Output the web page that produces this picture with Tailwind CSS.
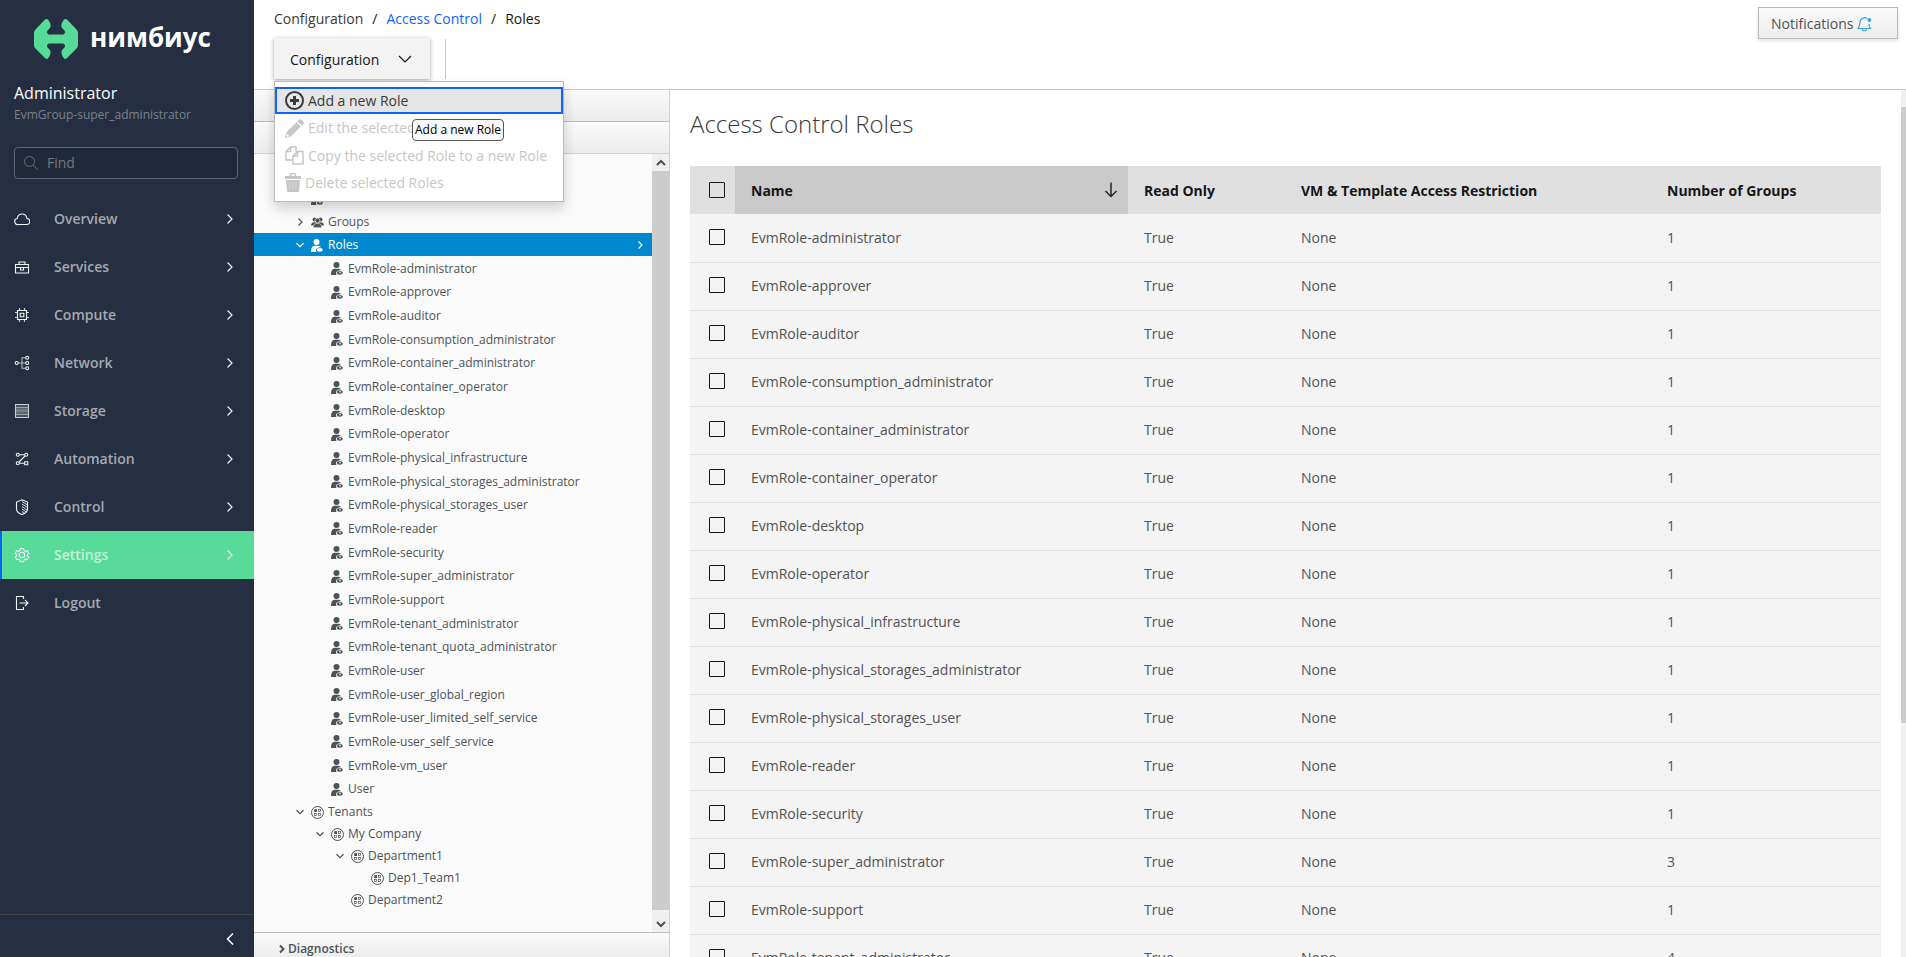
<!DOCTYPE html>
<html lang="en">
<head>
<meta charset="utf-8">
<title>Configuration / Access Control / Roles</title>
<script src="https://cdn.jsdelivr.net/npm/@tailwindcss/browser@4"></script>
</head>
<body class="font-['Open_Sans','Noto_Sans',sans-serif] text-sm text-[#161616] bg-white">
<svg class="hidden" aria-hidden="true">
  <symbol id="chev-right" viewBox="0 0 16 16"><path d="M5.500 3.500 10 8l-4.500 4.500" fill="none" stroke="currentColor" stroke-width="1.200"/></symbol>
  <symbol id="angle-right" viewBox="0 0 10 10"><path d="M3.500 1.500 7 5 3.500 8.500" fill="none" stroke="currentColor" stroke-width="1.200"/></symbol>
  <symbol id="angle-down" viewBox="0 0 10 10"><path d="M1.500 3.300 5 6.700 8.500 3.300" fill="none" stroke="currentColor" stroke-width="1.200"/></symbol>
  <symbol id="angle-bold" viewBox="0 0 10 10"><path d="M3 1.500 6.500 5 3 8.500" fill="none" stroke="currentColor" stroke-width="2"/></symbol>
  <symbol id="scroll-chev" viewBox="0 0 10 10"><path d="M1 7 5 3l4 4" fill="none" stroke="#505050" stroke-width="2"/></symbol>
  <symbol id="role" viewBox="0 0 12 13"><circle cx="5.500" cy="3" r="3"/><path d="M0 13c0-4 1-6 3.500-6.300h4C9 7 9.800 7.500 10.300 8.500 8 8 5.500 9 5 10.800c-.1.900.2 1.600.6 2.200z"/><ellipse cx="8.800" cy="10.800" rx="2.900" ry="1.900"/><circle cx="9" cy="10.600" r="1" fill="#fafafa" fill-opacity=".75"/></symbol>
  <symbol id="groups" viewBox="0 0 13 12"><circle cx="3.500" cy="3.500" r="2"/><circle cx="9.500" cy="3.500" r="2"/><path d="M0 9.500C.2 7.500 1 6.300 3 6.200h7c2 .1 2.800 1.300 3 3.300z"/><circle cx="6.500" cy="4.500" r="2.400" stroke="#fafafa" stroke-width=".6"/><path d="M2.200 11.700c.1-2.600 1.100-4.200 3.300-4.300h2c2.200.1 3.200 1.700 3.300 4.300z" stroke="#fafafa" stroke-width=".6"/></symbol>
  <symbol id="tenant" viewBox="0 0 13 13"><circle cx="6.500" cy="6.500" r="6" fill="none" stroke="currentColor"/><rect x="3.200" y="3.200" width="2.800" height="2.800"/><g fill="none" stroke="currentColor" stroke-width=".7"><rect x="7.400" y="3.400" width="2" height="2"/><rect x="3.500" y="7.500" width="2" height="2"/><rect x="7.400" y="7.500" width="2" height="2"/></g></symbol>
</svg>

<div class="flex h-screen overflow-hidden">
  <aside class="flex w-[254px] shrink-0 flex-col bg-[#252f41]">
    <a href="#" class="flex items-center pt-[19px] pl-[34px] text-white">
      <svg class="h-10 w-11" viewBox="0 0 44 40" aria-hidden="true"><path fill="#58da98" d="M11 .5Q12.500-.5 14 .5 16.500 3.500 16.700 7q-.2 1.500-1.700 3-3 2.500-1.500 4.500Q14.500 16 17 15.500h10q2.500.5 3.500-1 1.500-2-1.500-4.500-1.500-1.500-1.700-3Q27.500 3.500 30 .5q1.500-1 3 0L43 11q1 1.500 1 3v12q0 2-1 3L33 39q-1.500 1.500-3 .5-2.500-3-2.700-6.500.2-1.500 1.700-3 3-2.500 1.500-4.500-1-1.500-3.500-1H17q-2.500-.5-3.500 1-1.500 2 1.500 4.500 1.500 1.500 1.700 3-.2 3.500-2.700 6.500-1.500 1-3-.5L1 29q-1-1-1-3V14q0-1.500 1-3z"/></svg>
      <span class="ml-3 pb-1 text-[26px] leading-9 font-bold">нимбиус</span>
    </a>
    <div class="px-3.5 pt-6">
      <div class="text-base leading-5 text-white">Administrator</div>
      <div class="mt-0.5 text-xs leading-5 text-[#7b828d]">EvmGroup-super_administrator</div>
    </div>
    <label class="mt-[22px] mr-4 ml-3.5 flex h-8 items-center gap-2 rounded-[4px] border border-[#5d6674] bg-[#20293a] pl-2">
      <svg class="size-4 text-[#6b6f73]" viewBox="0 0 16 16" fill="none" stroke="currentColor" aria-hidden="true"><circle cx="6.500" cy="6.500" r="5"/><path d="m10.200 10.200 4.600 4.600"/></svg>
      <input aria-label="Find" placeholder="Find" class="w-40 bg-transparent text-sm text-white outline-none placeholder:text-[#72777d]">
    </label>
    <nav class="mt-4 flex flex-col" id="nav"></nav>
    <div class="mt-auto flex h-[43px] items-start justify-end border-t border-[#45434a] pt-4 pr-4">
      <button aria-label="Collapse" class="text-white"><svg class="block size-4" viewBox="0 0 16 16"><path d="M11 2.500 5.500 8l5.500 5.500" fill="none" stroke="currentColor" stroke-width="1.500"/></svg></button>
    </div>
  </aside>

  <main class="flex min-w-0 flex-1 flex-col">
    <header class="flex h-[89px] shrink-0 justify-between pr-2 pl-5">
      <div>
        <nav class="flex h-[38px] items-center gap-[9px] text-[#161616]">
          <span class="text-[#393939]">Configuration</span><span>/</span><a href="#" class="text-[#0f62fe]">Access Control</a><span>/</span><span>Roles</span>
        </nav>
        <div class="relative z-10 flex gap-[15px]">
          <button class="flex h-[41px] w-[156px] items-center justify-between bg-[#f3f3f3] px-4 pt-0.5 shadow-[0_1px_4px_rgba(0,0,0,0.35)]">Configuration
            <svg class="size-[18px]" viewBox="0 0 18 18" aria-hidden="true"><path d="m3 5 6 6 6-6" fill="none" stroke="currentColor" stroke-width="1.200"/></svg>
          </button>
          <div class="mt-px w-px bg-[#c6c6c6]"></div>
          <div class="absolute top-[43px] left-0 w-[290px] border border-[#bbb] bg-white py-[5px] whitespace-nowrap text-[#c6c6c6] shadow-[0_6px_12px_rgba(0,0,0,0.175)]" role="menu">
            <button role="menuitem" class="flex h-[27px] w-full items-center gap-1 border-2 border-[#0f62fe] bg-[#e5e5e5] px-2 text-[#393939]">
              <svg class="size-[19px]" viewBox="0 0 19 19" aria-hidden="true"><circle cx="9.500" cy="9.500" r="8.500" fill="none" stroke="currentColor" stroke-width="2"/><path d="M8 5h3v3h3v3h-3v3H8v-3H5V8h3z" fill="currentColor"/></svg>Add a new Role</button>
            <button role="menuitem" disabled class="flex h-7 w-full items-center gap-1 px-2.5">
              <svg class="size-[19px]" viewBox="0 0 19 19" fill="currentColor" aria-hidden="true"><path d="M0 19l1.200-5.500L11.500 3.200 15.800 7.500 5.500 17.800zM12.500 2.200 14.200.5q1-.8 2 0l2.300 2.300q.8 1 0 2l-1.700 1.700z"/><path d="m1.800 14.500 2.700 2.700-2 .7-1.300-1.300z" fill="#fff"/></svg>Edit the selected Role</button>
            <button role="menuitem" disabled class="flex h-[27px] w-full items-center gap-1 px-2.5">
              <svg class="size-[19px]" viewBox="0 0 19 19" fill="none" stroke="currentColor" stroke-width="1.500" aria-hidden="true"><path d="M7.500 14H1V5.500L5.500 1H11v4.500M5.500 1v4.500H1M12.500 5.500H18V18H8v-8zM12.500 5.500V10H8"/></svg>Copy the selected Role to a new Role</button>
            <button role="menuitem" disabled class="flex h-[27px] w-full items-center gap-1 px-2.5">
              <svg class="h-[19px] w-4" viewBox="0 0 16 19" aria-hidden="true"><path fill="currentColor" d="M0 3h4.500L5.500 0h5l1 3H16v3H0zM6 2.800h4L9.500 1.300h-3zM1 7h14l-1 11q0 1-1 1H3q-1 0-1-1z"/><path d="M5 9v7M8 9v7M11 9v7" stroke="#fff" stroke-opacity=".35" fill="none"/></svg>Delete selected Roles</button>
            <div role="tooltip" class="absolute top-[37px] left-[137px] rounded-[4px] border border-[#555] bg-[#f9f9fb] px-0.5 text-xs leading-5 text-black">Add a new Role</div>
          </div>
        </div>
      </div>
      <button class="mt-[7px] flex h-8 w-[140px] items-center gap-1 border border-[#bbb] bg-linear-to-b from-[#fafafa] to-[#ededed] pt-0.5 pl-3 text-[#4d5258] shadow-[0_2px_4px_rgba(3,3,3,0.12)]">Notifications
        <svg class="size-4" viewBox="0 0 16 16" fill="none" stroke="#39a5dc" stroke-width="1.200" aria-hidden="true"><path d="M10 2.500C8 .8 3.500 1.500 3 6.500c-.1 2.500-.4 4-2 6h12.500C12.300 11 12 9.500 12 8M5 13c.3 2.500 4 2.500 4.500 0"/><circle cx="12.300" cy="4" r="2" fill="#39a5dc" stroke="none"/></svg>
      </button>
    </header>

    <div class="flex min-h-0 flex-1 border-t border-[#ccc]">
      <section class="flex w-[416px] shrink-0 flex-col border-r border-[#d1d1d1] text-xs text-[#4d5258]">
        <a href="#" class="flex h-8 shrink-0 items-center gap-px border-b border-[#bbb] bg-linear-to-b from-[#fafafa] to-[#ededed] pl-6 font-semibold"><svg class="size-2.5"><use href="#angle-bold"/></svg>Settings</a>
        <a href="#" class="flex h-8 shrink-0 items-center gap-px border-b border-[#d1d1d1] bg-linear-to-b from-[#fafafa] to-[#ededed] pl-6 font-semibold"><svg class="size-2.5"><use href="#angle-bold"/></svg>Access Control</a>
        <div class="flex min-h-0 flex-1 bg-[#fafafa]">
          <ul class="flex min-w-0 flex-1 flex-col overflow-hidden pt-8 whitespace-nowrap" id="tree"></ul>
          <div class="flex w-[17px] flex-col items-center bg-[#f0f0f0]" aria-hidden="true">
            <div class="flex h-[17px] items-center"><svg class="size-2.5"><use href="#scroll-chev"/></svg></div>
            <div class="w-full flex-1 bg-[#cdcdcd]"></div>
            <div class="flex h-[22px] items-center pt-1.5"><svg class="size-2.5 rotate-180"><use href="#scroll-chev"/></svg></div>
          </div>
        </div>
        <a href="#" class="flex h-[25px] shrink-0 items-start gap-px overflow-hidden border-t border-[#bbb] bg-linear-to-b from-[#fafafa] to-[#ededed] pt-2 pl-[23px] leading-4 font-semibold"><svg class="mt-[3px] size-2.5"><use href="#angle-bold"/></svg>Diagnostics</a>
      </section>

      <section class="min-w-0 flex-1 overflow-hidden pr-5 pl-5">
        <h1 class="pt-[18px] pb-[26px] text-2xl leading-8 font-light text-[#393939]">Access Control Roles</h1>
        <table class="w-full table-fixed border-collapse text-left">
          <colgroup><col class="w-[45px]"><col class="w-[33%]"><col class="w-[157px]"><col class="w-[366px]"><col></colgroup>
          <thead><tr class="h-12 bg-[#e0e0e0] font-bold">
            <th class="pl-[19px]"><input type="checkbox" aria-label="Select all" class="block size-4 appearance-none rounded-[1px] border border-[#161616]"></th>
            <th class="bg-[#cacaca] px-4 pt-0.5"><button class="flex w-full items-center justify-between font-bold">Name<svg class="-mr-2 size-[18px]" viewBox="0 0 18 18" aria-hidden="true"><path d="M9 .5v14M3.500 9 9 14.500 14.500 9" fill="none" stroke="#262626" stroke-width="1.500"/></svg></button></th>
            <th class="px-4 pt-0.5">Read Only</th><th class="px-4 pt-0.5">VM &amp; Template Access Restriction</th><th class="px-4 pt-0.5">Number of Groups</th>
          </tr></thead>
          <tbody id="rows" class="bg-[#f4f4f4] text-[#525252]"></tbody>
        </table>
      </section>
      <div class="flex w-[5px] shrink-0 flex-col bg-[#f0f0f0]" aria-hidden="true"><div class="mt-[17px] h-[71%] bg-[#cdcdcd]"></div></div>
    </div>
  </main>
</div>

<script>
const icons = {
  Overview: '<path d="M4.500 13.500h8a3 3 0 0 0 .4-6C12.500 4.500 10.500 3 8 3S3.700 4.500 3.200 7.500a3 3 0 0 0 1.300 6z"/>',
  Services: '<path d="M1.500 5.500h13v8.500h-13zM5 5.500V3h6v2.500M1.500 8.500h13M6.500 8.500V11h3V8.500"/>',
  Compute: '<path d="M3.500 3.500h9v9h-9zM6.200 6.200h3.600v3.600H6.200z"/><path d="M5.500 3V1M10.500 3V1M5.500 15v-2M10.500 15v-2M3 5.500H1M3 10.500H1M15 5.500h-2M15 10.500h-2" stroke-opacity=".8"/>',
  Network: '<circle cx="2.700" cy="8" r="1.500"/><circle cx="13.200" cy="2.800" r="1.500"/><circle cx="13.200" cy="8" r="1.500"/><circle cx="13.200" cy="13.200" r="1.500"/><path d="M4.200 8h7.500M11.700 2.800H8v10.400h3.700" stroke-opacity=".7"/>',
  Storage: '<path d="M1.500 1.500h13v13h-13zM1.500 4.700h13M1.500 8h13M1.500 11.300h13" stroke-opacity=".8"/><path d="M2 3h12M2 6.400h12M2 9.700h12M2 13h12" stroke-opacity=".35"/>',
  Automation: '<circle cx="3.800" cy="3.800" r="1.500"/><circle cx="12.200" cy="3.800" r="1.500"/><circle cx="3.800" cy="12.200" r="1.500"/><path d="M10.700 10.700h3v3h-3zM5.300 3.800h5.400M5.300 12.200h5.400M11 5l-6 6"/>',
  Control: '<path d="M8 .8 13.500 3v7c0 3-2.500 4.500-5.500 5.500-3-1-5.500-2.500-5.500-5.500V3z"/><path d="M8 2.500l5.500 3.500M8 5l5.500 3.500M8 7.500l5 3.500M8 10l4 2.800M8 12.500l2.500 1.500" stroke-width=".9"/>',
  Settings: '<circle cx="8" cy="8" r="2.700"/><path d="M6.500 1.500h3l.5 2 1.300.8 2-.6 1.500 2.600-1.500 1.500v.9l1.500 1.400-1.500 2.600-2-.5-1.300.8-.5 1.800h-3l-.5-1.800-1.300-.8-2 .5-1.500-2.600 1.500-1.400v-.9L1.200 6.300l1.500-2.600 2 .6L6 3.500z"/>',
  Logout: '<path d="M9.500 4V1.500h-7v13h7V12M5.500 8h8M11 5l3 3-3 3"/>'
};
document.getElementById('nav').innerHTML = Object.keys(icons).map(n => {
  const active = n === 'Settings';
  return `<a href="#" class="${active ? 'flex h-12 items-center border-l-2 border-[#0f62fe] bg-[#58da98] pr-4 pl-3 font-semibold text-[#c4f3da]' : 'flex h-12 items-center pr-4 pl-3.5 font-semibold text-[#a5aab2]'}">
    <svg class="size-4 text-[#f0f2f4]" viewBox="0 0 16 16" fill="none" stroke="currentColor" stroke-width="1.100" aria-hidden="true">${icons[n]}</svg>
    <span class="ml-6 flex-1">${n}</span>${n === 'Logout' ? '' : '<svg class="size-4 text-[#f0f2f4]" aria-hidden="true"><use href="#chev-right"/></svg>'}</a>`;
}).join('');

const roles = ['administrator','approver','auditor','consumption_administrator','container_administrator','container_operator','desktop','operator','physical_infrastructure','physical_storages_administrator','physical_storages_user','reader','security','super_administrator','support','tenant_administrator','tenant_quota_administrator','user','user_global_region','user_limited_self_service','user_self_service','vm_user'].map(r => 'EvmRole-' + r);

const arrow = kind => kind ? `<svg class="mr-1.5 size-2.5" aria-hidden="true"><use href="#angle-${kind}"/></svg>` : '<span class="mr-1.5 size-2.5"></span>';
const roleIcon = '<svg class="mr-[5px] h-[13px] w-3" fill="currentColor" aria-hidden="true"><use href="#role"/></svg>';
const tenantIcon = '<svg class="mr-1 size-[13px]" fill="currentColor" aria-hidden="true"><use href="#tenant"/></svg>';
const tenant = (pad, kind, name) => `<li class="flex h-[22px] shrink-0 items-center ${pad}">${arrow(kind)}${tenantIcon}${name}</li>`;
document.getElementById('tree').innerHTML =
  `<li class="flex h-6 shrink-0 items-center pl-[41px]">${arrow('right')}${roleIcon}Users</li>
   <li class="flex h-[23px] shrink-0 items-center pl-[41px]">${arrow('right')}<svg class="mr-1 h-3 w-[13px]" fill="currentColor" aria-hidden="true"><use href="#groups"/></svg>Groups</li>
   <li class="flex h-[23px] shrink-0 items-center bg-[#0088ce] pt-px pr-[7px] pl-[41px] text-white">${arrow('down')}${roleIcon}<span class="flex-1">Roles</span><svg class="size-2.5" aria-hidden="true"><use href="#angle-right"/></svg></li>
   <li class="shrink-0 pt-px"><ul class="grid h-[544px] auto-rows-fr">` +
  [...roles, 'User'].map(r => `<li class="flex items-center pl-[61px]">${arrow('')}${roleIcon}${r}</li>`).join('') + '</ul></li>' +
  tenant('pl-[41px]', 'down', 'Tenants') + tenant('pl-[61px]', 'down', 'My Company') + tenant('pl-[81px]', 'down', 'Department1') +
  tenant('pl-[101px]', '', 'Dep1_Team1') + tenant('pl-[81px]', '', 'Department2');

const groups = { 'EvmRole-super_administrator': 3, 'EvmRole-tenant_administrator': 4 };
document.getElementById('rows').innerHTML = roles.map(r => `<tr class="h-12 border-b border-[#e0e0e0]">
  <td class="pb-0.5 pl-[19px]"><input type="checkbox" aria-label="${r}" class="block size-4 appearance-none rounded-[1px] border border-[#161616]"></td>
  <td class="px-4">${r}</td><td class="px-4">True</td><td class="px-4">None</td><td class="px-4">${groups[r] || 1}</td></tr>`).join('');
</script>
</body>
</html>
